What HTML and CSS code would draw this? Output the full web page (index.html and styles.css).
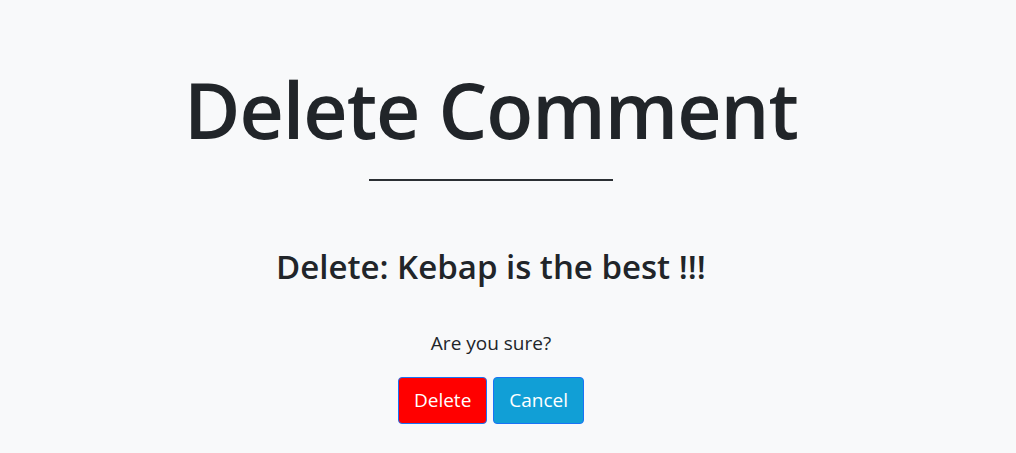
FILE: index.html
```html
<!DOCTYPE html>
<html lang="en">
<head>
<meta charset="utf-8">
<title>Delete Comment</title>
<link rel="stylesheet" href="styles.css">
</head>
<body>
<main class="page">
  <h1 class="title">Delete Comment</h1>
  <hr class="rule">
  <h2 class="subtitle">Delete: Kebap is the best !!!</h2>
  <p class="question">Are you sure?</p>
  <div class="actions">
    <button class="btn btn-delete" type="button">Delete</button>
    <button class="btn btn-cancel" type="button">Cancel</button>
  </div>
</main>
</body>
</html>
```
FILE: styles.css
```css
html, body {
  margin: 0;
  padding: 0;
  background: #f8f9fa;
  color: #212529;
  font-family: "Open Sans", "Noto Sans", sans-serif;
}

.page {
  width: 966px;
  margin: 0 auto;
  padding: 64px 34px 0 0;
  display: flex;
  flex-direction: column;
  align-items: center;
  text-align: center;
}

.title {
  margin: 0;
  font-size: 77px;
  font-weight: 600;
  line-height: 1.2;
  letter-spacing: -1px;
}

.rule {
  width: 244px;
  margin: 23px 0 0;
  border: 0;
  border-top: 2px solid #2b2f33;
  height: 0;
}

.subtitle {
  margin: 66px 0 0;
  font-size: 33px;
  font-weight: 600;
  line-height: 1.2;
}

.question {
  margin: 42px 0 0;
  font-size: 19px;
  line-height: 1.5;
}

.actions {
  margin-top: 20px;
  display: flex;
  gap: 6px;
}

.btn {
  font-family: inherit;
  font-size: 19px;
  line-height: 29px;
  padding: 8px 15px;
  border: 1px solid #1a73f5;
  border-radius: 4px;
  color: #fff;
  cursor: pointer;
}

.btn-delete {
  background: #ff0000;
}

.btn-cancel {
  background: #119fd6;
}
```
